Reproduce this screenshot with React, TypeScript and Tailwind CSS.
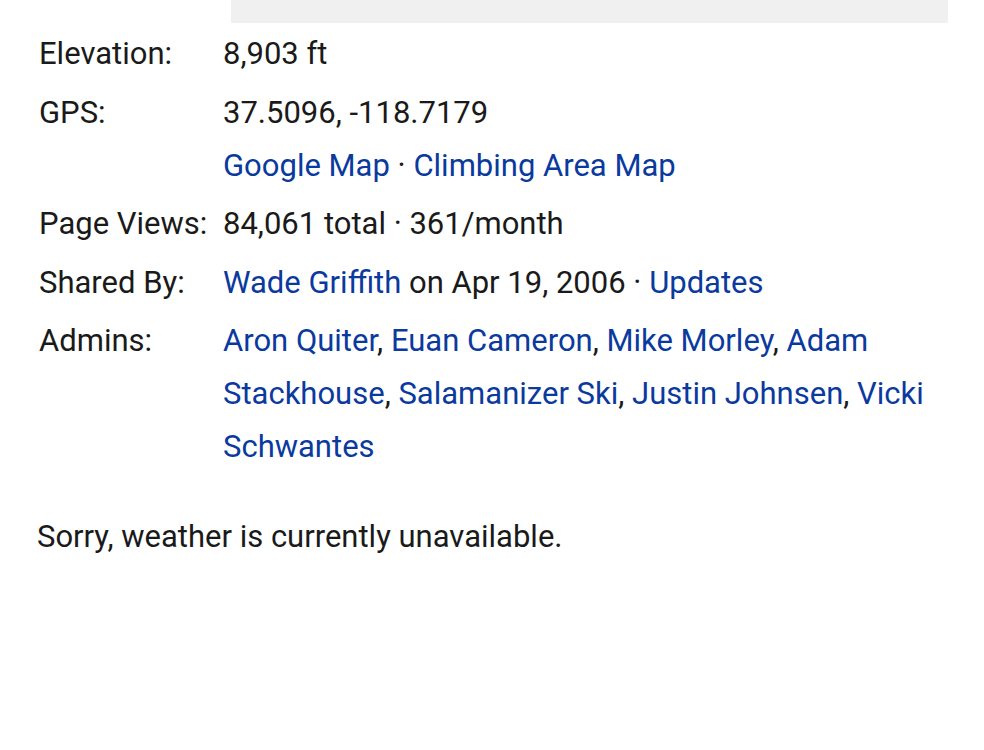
const admins = [
  "Aron Quiter",
  "Euan Cameron",
  "Mike Morley",
  "Adam Stackhouse",
  "Salamanizer Ski",
  "Justin Johnsen",
  "Vicki Schwantes",
];

function Link({ children }: { children: React.ReactNode }) {
  return <a className="text-[#0b3a9e]">{children}</a>;
}

function Row({ label, children }: { label: string; children: React.ReactNode }) {
  return (
    <div className="flex mb-[5.5px]">
      <div className="w-[184px] shrink-0">{label}</div>
      <div className="flex-1">{children}</div>
    </div>
  );
}

export default function App() {
  return (
    <main
      className="min-h-[750px] bg-white text-[#1a1a1a] text-[31px] leading-[53px]"
      style={{ fontFamily: "Roboto, 'Liberation Sans', sans-serif" }}
    >
      <div className="ml-[231px] w-[717px] h-[23px] bg-[#f0f0f0]" />
      <section className="pl-[39px] pr-[36px] pt-[4px]">
        <Row label="Elevation:">8,903 ft</Row>
        <Row label="GPS:">
          <div>37.5096, -118.7179</div>
          <div>
            <Link>Google Map</Link> · <Link>Climbing Area Map</Link>
          </div>
        </Row>
        <Row label="Page Views:">84,061 total · 361/month</Row>
        <Row label="Shared By:">
          <Link>Wade Griffith</Link> on Apr 19, 2006 · <Link>Updates</Link>
        </Row>
        <Row label="Admins:">
          {admins.map((name, i) => (
            <span key={name}>
              <Link>{name}</Link>
              {i < admins.length - 1 ? ", " : ""}
            </span>
          ))}
        </Row>
      </section>
      <p className="pl-[37px] mt-[37px]">Sorry, weather is currently unavailable.</p>
    </main>
  );
}
